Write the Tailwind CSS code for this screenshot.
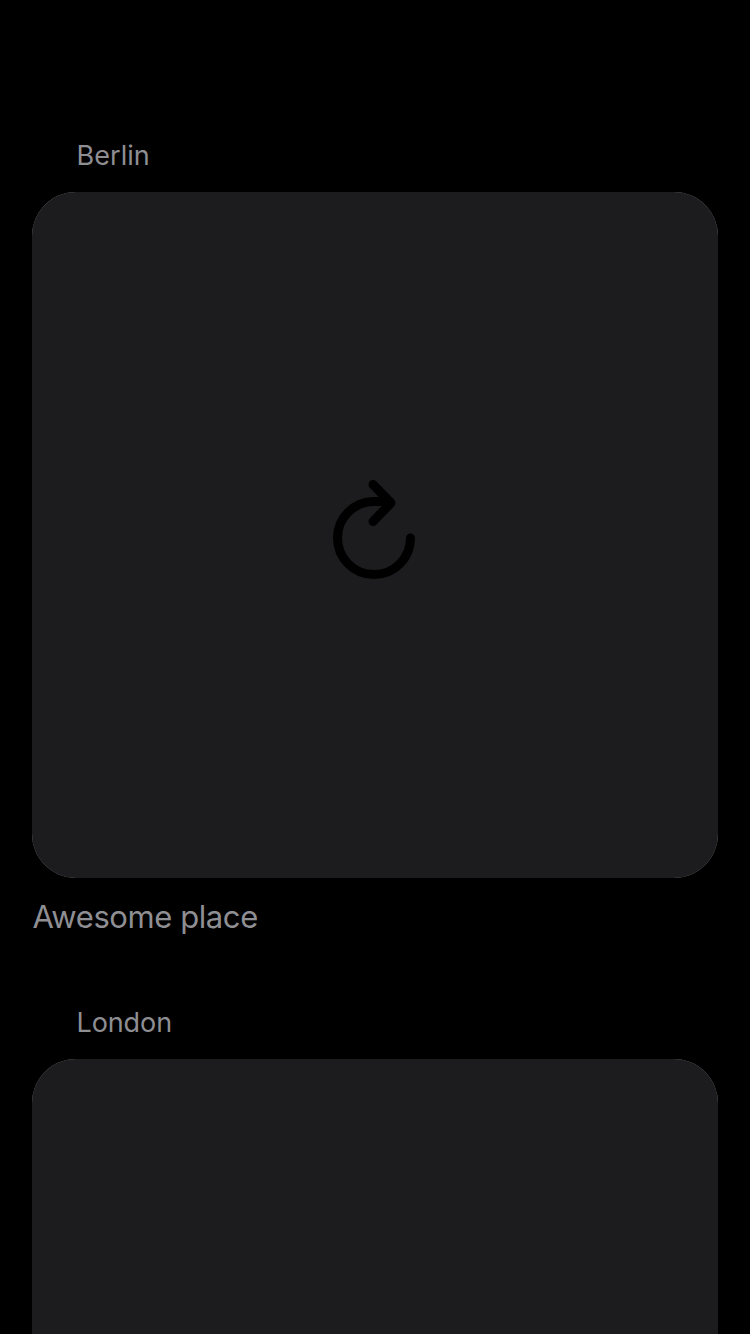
<!DOCTYPE html>
<html lang="en">
<head>
<meta charset="utf-8">
<title>Places</title>
<script src="https://cdn.jsdelivr.net/npm/@tailwindcss/browser@4"></script>
</head>
<body class="bg-black font-['Inter',sans-serif] text-[#8e8e93]">
<main class="h-[1334px] overflow-hidden px-8 pt-[134px]">
  <section class="h-[867px]">
    <h2 class="h-[58px] pl-[44.5px] text-[27px] leading-[44px] tracking-[0.05px]">Berlin</h2>
    <div class="rounded-[44px] bg-[#8e8e93]">
      <div class="flex h-[686px] items-center justify-center rounded-[44px] bg-[#1c1c1e]">
        <svg class="h-[120px] w-[110px]" viewBox="320 475 110 120" fill="none" stroke="#000" stroke-width="9" stroke-linecap="round" stroke-linejoin="round"><path d="M410.500 538A36.500 36.500 0 1 1 374 501.500H390M373 484.500L391 503L373 521.500"/></svg>
      </div>
    </div>
    <p class="pl-[0.5px] pt-[17px] text-[31px] leading-[44px] tracking-[-0.42px]">Awesome place</p>
  </section>
  <section>
    <h2 class="h-[58px] pl-[44.5px] text-[27px] leading-[44px] tracking-[-0.1px]">London</h2>
    <div class="rounded-[44px] bg-[#8e8e93]">
      <div class="h-[686px] rounded-[44px] bg-[#1c1c1e]"></div>
    </div>
  </section>
</main>
</body>
</html>
